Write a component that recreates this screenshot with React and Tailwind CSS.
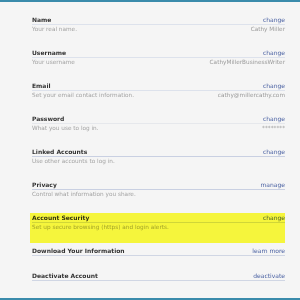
import React from "react";

const rows = [
  { t: "Name", d: "Your real name.", a: "change", v: "Cathy Miller", line: "border-[#dde2ec]" },
  { t: "Username", d: "Your username", a: "change", v: "CathyMillerBusinessWriter", line: "border-[#dde2ec]" },
  { t: "Email", d: "Set your email contact information.", a: "change", v: "cathy@millercathy.com", line: "border-[#dde2ec]" },
  { t: "Password", d: "What you use to log in.", a: "change", v: "********", line: "border-[#e6e8ec]" },
  { t: "Linked Accounts", d: "Use other accounts to log in.", a: "change", v: "", line: "border-[#c9d0e2]" },
  { t: "Privacy", d: "Control what information you share.", a: "manage", v: "", line: "border-[#c9d0e2]" },
  { t: "Account Security", d: "Set up secure browsing (https) and login alerts.", a: "change", v: "", line: "border-[#d0d6e4]", hl: true },
  { t: "Download Your Information", a: "learn more", line: "border-[#d0d6e4]" },
  { t: "Deactivate Account", a: "deactivate", line: "border-[#d0d6e4]" },
];

export default function App() {
  return (
    <div className="w-[300px] h-[300px] bg-[#f5f5f5] flex flex-col overflow-hidden font-['DejaVu_Sans',sans-serif]">
      <div className="h-[2px] bg-[#3a8bab] shrink-0" />
      <div className="flex flex-col pl-[32px] pr-[15px] pt-[13px]">
        {rows.map((r) => (
          <div key={r.t} className={`relative flex flex-col ${r.d ? "mb-[13px]" : "mb-[15px]"}`}>
            <div className={`flex justify-between items-center h-[10px] border-b ${r.line}`}>
              <span className="text-[6px] font-bold text-[#333] leading-none">{r.t}</span>
              <span className="text-[6px] text-[#4b62a3] leading-none">{r.a}</span>
            </div>
            {r.d && (
              <div className="flex justify-between items-center h-[10px]">
                <span className="text-[5.75px] text-[#a3a3a3] leading-none">{r.d}</span>
                <span className="text-[5.75px] text-[#9a9a9a] leading-none">{r.v}</span>
              </div>
            )}
            {r.hl && (
              <div className="absolute left-[-2px] right-0 top-0 h-[30px] bg-[#ffff3e] mix-blend-multiply pointer-events-none" />
            )}
          </div>
        ))}
      </div>
      <div className="mt-auto h-[2px] bg-[#3a8bab] shrink-0" />
    </div>
  );
}
